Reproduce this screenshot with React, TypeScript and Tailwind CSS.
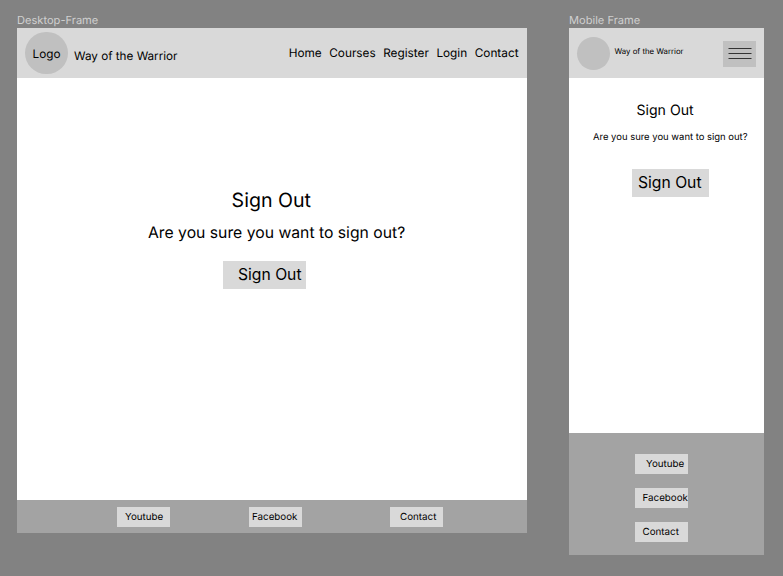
import React from "react";

const navLinks = ["Home", "Courses", "Register", "Login", "Contact"];

function DesktopFrame() {
  return (
    <section className="w-[510px] shrink-0">
      <h2 className="h-[16px] text-[11.1px] leading-[17px] text-[#d0d0d0]">Desktop-Frame</h2>
      <div className="flex h-[505px] flex-col bg-white">
        <header className="flex h-[50px] shrink-0 bg-[#d9d9d9] pl-[8px]">
          <div className="mt-[4px] flex h-[42px] w-[43px] items-center justify-center rounded-full bg-[#c0c0c0] pt-[3px] text-[11.76px]">
            Logo
          </div>
          <span className="mt-[20px] ml-[6px] text-[11.7px] leading-[16px]">Way of the Warrior</span>
          <nav className="mt-[17px] mr-[8.5px] ml-auto flex gap-[7.5px] text-[11.8px] leading-[16px]">
            {navLinks.map((label) => (
              <a key={label}>{label}</a>
            ))}
          </nav>
        </header>
        <main className="flex grow flex-col pt-[108px]">
          <h1 className="ml-[214.6px] text-[19.6px] leading-[28px]">Sign Out</h1>
          <p className="mt-[7px] ml-[131px] text-[15.74px] leading-[24px]">Are you sure you want to sign out?</p>
          <button className="mt-[16px] ml-[206px] h-[28px] w-[82.5px] bg-[#d9d9d9] pl-[15px] text-left text-[15.68px] leading-[28px] whitespace-nowrap">
            Sign Out
          </button>
        </main>
        <footer className="flex h-[33px] shrink-0 bg-[#a3a3a3] pt-[7px] pl-[100px] text-[9.8px] leading-[21px]">
          <a className="h-[20px] w-[53px] bg-[#d9d9d9] pl-[8px]">Youtube</a>
          <a className="ml-[79px] h-[20px] w-[53px] bg-[#d9d9d9] pl-[3px]">Facebook</a>
          <a className="ml-[88px] h-[20px] w-[53px] bg-[#d9d9d9] pl-[10px]">Contact</a>
        </footer>
      </div>
    </section>
  );
}

function MobileFrame() {
  return (
    <section className="w-[194.5px] shrink-0">
      <h2 className="h-[16px] text-[11.1px] leading-[17px] text-[#d0d0d0]">Mobile Frame</h2>
      <div className="flex h-[527px] flex-col bg-white">
        <header className="flex h-[50px] shrink-0 bg-[#d9d9d9] pl-[8px]">
          <div className="mt-[9px] size-[33px] rounded-full bg-[#c0c0c0]" />
          <span className="mt-[15px] ml-[4.5px] text-[7.8px] leading-[16px]">Way of the Warrior</span>
          <button className="mt-[13px] mr-[8px] ml-auto flex h-[26px] w-[32.5px] justify-center bg-[#c0c0c0]" aria-label="Menu">
            <svg className="h-[26px] w-[32px]" viewBox="0 0 32 26" stroke="#333" strokeWidth="1">
              <path d="M5.500 7.500H28.500M5.500 12.500H28.500M5.500 17.500H28.500" />
            </svg>
          </button>
        </header>
        <main className="flex grow flex-col pt-[22px]">
          <h1 className="ml-[67.5px] text-[14.1px] leading-[21px]">Sign Out</h1>
          <p className="mt-[8px] ml-[24px] text-[9.46px] leading-[18px]">Are you sure you want to sign out?</p>
          <button className="mt-[22px] ml-[63px] h-[28px] w-[77px] bg-[#d9d9d9] pb-[2px] pl-[6px] text-left text-[15.68px] leading-[28px] whitespace-nowrap">
            Sign Out
          </button>
        </main>
        <footer className="flex h-[122px] shrink-0 flex-col gap-[14px] bg-[#a3a3a3] pt-[21px] pl-[66px] text-[9.8px] leading-[21px]">
          <a className="h-[20px] w-[53px] bg-[#d9d9d9] pl-[11px]">Youtube</a>
          <a className="h-[20px] w-[53px] bg-[#d9d9d9] pl-[7.5px]">Facebook</a>
          <a className="h-[20px] w-[53px] bg-[#d9d9d9] pl-[7.5px]">Contact</a>
        </footer>
      </div>
    </section>
  );
}

export default function App() {
  return (
    <div className="flex h-[576px] w-[783px] gap-[42px] overflow-hidden bg-[#828282] pt-[12px] pl-[17px] font-['Inter',sans-serif] text-black [text-rendering:geometricPrecision]">
      <DesktopFrame />
      <MobileFrame />
    </div>
  );
}
